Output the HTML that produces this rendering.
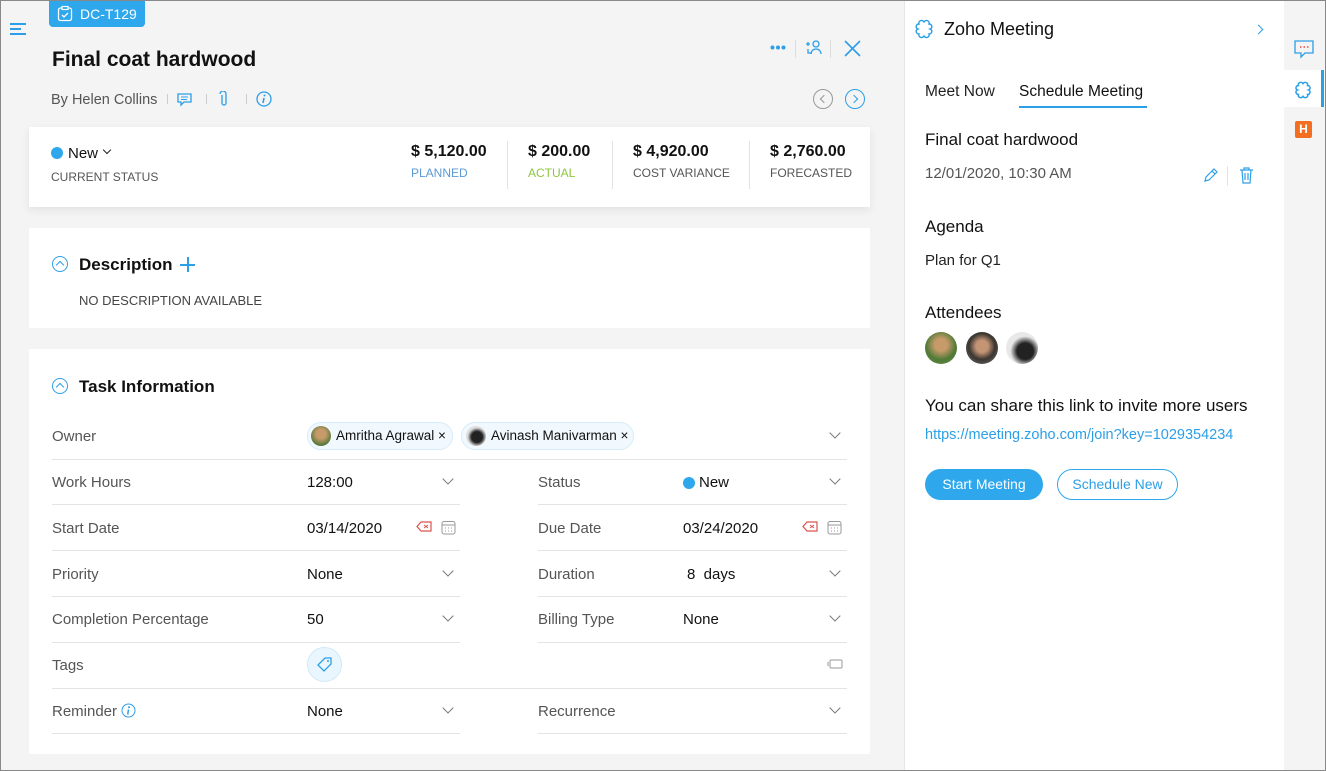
<!DOCTYPE html>
<html><head><meta charset="utf-8"><style>
*{box-sizing:border-box;margin:0;padding:0}
body{width:1326px;height:771px;overflow:hidden;font-family:"Liberation Sans",sans-serif;color:#111;background:#f4f4f4;position:relative}
.a{position:absolute;white-space:nowrap}
.card{position:absolute;left:29px;width:841px;background:#fff}
.lbl{color:#555;font-size:15px}
.val{color:#111;font-size:15px}
.sep{position:absolute;height:1px;background:#e4e4e4}
.chev{position:absolute;width:8px;height:8px;border-right:1.3px solid #777;border-bottom:1.3px solid #777;transform:rotate(45deg)}
.blue{color:#2d9fe6}
</style></head><body>
<!-- hamburger -->
<div class="a" style="left:10px;top:23px;width:16px;height:2px;background:#2d9fe6"></div>
<div class="a" style="left:10px;top:28px;width:11px;height:2px;background:#2d9fe6"></div>
<div class="a" style="left:10px;top:33px;width:16px;height:2px;background:#2d9fe6"></div>
<!-- tag -->
<div class="a" style="left:49px;top:0;width:96px;height:27px;background:#2ea7ec;border-radius:0 0 4px 4px;color:#fff;font-size:14px;padding:6px 0 0 31px">DC-T129</div>
<svg class="a" style="left:57px;top:5px" width="16" height="17" viewBox="0 0 16 17"><rect x="1.5" y="3" width="13" height="12.5" rx="2" fill="none" stroke="#fff" stroke-width="1.3"/><rect x="5" y="1.5" width="6" height="3" fill="#2ea7ec" stroke="#fff" stroke-width="1.2"/><path d="M5 10l2 2 4-4" fill="none" stroke="#fff" stroke-width="1.3"/></svg>
<div class="a" style="left:52px;top:48px;font-size:21px;font-weight:bold;color:#111">Final coat hardwood</div>
<div class="a" style="left:51px;top:92px;font-size:14.5px;color:#555">By Helen Collins</div>
<div class="a" style="left:167px;top:94px;width:1px;height:10px;background:#ccc"></div>
<div class="a" style="left:206px;top:94px;width:1px;height:10px;background:#ccc"></div>
<div class="a" style="left:246px;top:94px;width:1px;height:10px;background:#ccc"></div>
<svg class="a" style="left:176px;top:92px" width="17" height="15" viewBox="0 0 17 15"><path d="M2 2h13v8H8l-3 3v-3H2z" fill="none" stroke="#2d9fe6" stroke-width="1.3"/><path d="M5 5h7M5 7.5h6" stroke="#2d9fe6"/></svg>
<svg class="a" style="left:219px;top:91px" width="10" height="17" viewBox="0 0 10 17"><path d="M3 4v8a2 2 0 004 0V3a3 3 0 00-6 0" fill="none" stroke="#2d9fe6" stroke-width="1.3"/></svg>
<svg class="a" style="left:256px;top:91px" width="16" height="16" viewBox="0 0 16 16"><circle cx="8" cy="8" r="7" fill="none" stroke="#2d9fe6" stroke-width="1.3"/><circle cx="8.5" cy="4.5" r="1" fill="#2d9fe6"/><path d="M8 7l-1 5" stroke="#2d9fe6" stroke-width="1.6"/></svg>
<!-- top right icons -->
<svg class="a" style="left:770px;top:45px" width="16" height="5"><circle cx="2.5" cy="2.5" r="2" fill="#2d9fe6"/><circle cx="8" cy="2.5" r="2" fill="#2d9fe6"/><circle cx="13.5" cy="2.5" r="2" fill="#2d9fe6"/></svg>
<div class="a" style="left:795px;top:40px;width:1px;height:18px;background:#ddd"></div>
<div class="a" style="left:830px;top:40px;width:1px;height:18px;background:#ddd"></div>
<svg class="a" style="left:805px;top:39px" width="18" height="18" viewBox="0 0 18 18"><circle cx="11" cy="5" r="3" fill="none" stroke="#2d9fe6" stroke-width="1.3"/><path d="M6 15a5 5 0 0110 0M1 5h4M3 3v4M3 10v4h4" fill="none" stroke="#2d9fe6" stroke-width="1.3"/></svg>
<svg class="a" style="left:844px;top:40px" width="17" height="17"><path d="M1 1l15 15M16 1L1 16" stroke="#2d9fe6" stroke-width="1.6"/></svg>
<div class="a" style="left:813px;top:89px;width:20px;height:20px;border:1.3px solid #999;border-radius:50%"></div>
<div class="a" style="left:821px;top:96px;width:6px;height:6px;border-left:1.3px solid #999;border-bottom:1.3px solid #999;transform:rotate(45deg)"></div>
<div class="a" style="left:845px;top:89px;width:20px;height:20px;border:1.5px solid #2d9fe6;border-radius:50%"></div>
<div class="a" style="left:851px;top:96px;width:6px;height:6px;border-right:1.5px solid #2d9fe6;border-top:1.5px solid #2d9fe6;transform:rotate(45deg)"></div>

<!-- card1 -->
<div class="card" style="top:127px;height:80px;box-shadow:0 3px 8px rgba(0,0,0,.08)"></div>
<div class="a" style="left:51px;top:147px;width:12px;height:12px;border-radius:50%;background:#2ea7ec"></div>
<div class="a val" style="left:68px;top:145px">New</div>
<div class="a" style="left:104px;top:147px;width:6px;height:6px;border-right:1.3px solid #222;border-bottom:1.3px solid #222;transform:rotate(45deg)"></div>
<div class="a" style="left:51px;top:170px;font-size:12px;color:#555">CURRENT STATUS</div>
<div class="a" style="left:411px;top:143px;font-size:16px;font-weight:bold">$ 5,120.00</div>
<div class="a" style="left:411px;top:166px;font-size:12px;color:#5a9ad6">PLANNED</div>
<div class="a" style="left:507px;top:141px;width:1px;height:48px;background:#e2e2e2"></div>
<div class="a" style="left:528px;top:143px;font-size:16px;font-weight:bold">$ 200.00</div>
<div class="a" style="left:528px;top:166px;font-size:12px;color:#8cc63f">ACTUAL</div>
<div class="a" style="left:612px;top:141px;width:1px;height:48px;background:#e2e2e2"></div>
<div class="a" style="left:633px;top:143px;font-size:16px;font-weight:bold">$ 4,920.00</div>
<div class="a" style="left:633px;top:166px;font-size:12px;color:#555">COST VARIANCE</div>
<div class="a" style="left:749px;top:141px;width:1px;height:48px;background:#e2e2e2"></div>
<div class="a" style="left:770px;top:143px;font-size:16px;font-weight:bold">$ 2,760.00</div>
<div class="a" style="left:770px;top:166px;font-size:12px;color:#555">FORECASTED</div>

<!-- card2 -->
<div class="card" style="top:228px;height:100px"></div>
<div class="a" style="left:52px;top:256px;width:16px;height:16px;border:1.3px solid #2d9fe6;border-radius:50%"></div>
<div class="a" style="left:57px;top:262px;width:6px;height:6px;border-left:1.3px solid #2d9fe6;border-top:1.3px solid #2d9fe6;transform:rotate(45deg)"></div>
<div class="a" style="left:79px;top:255px;font-size:17px;font-weight:bold">Description</div>
<div class="a" style="left:180px;top:264px;width:15px;height:1.5px;background:#2d9fe6"></div>
<div class="a" style="left:187px;top:257px;width:1.5px;height:15px;background:#2d9fe6"></div>
<div class="a" style="left:79px;top:293px;font-size:13px;color:#444">NO DESCRIPTION AVAILABLE</div>

<!-- card3 -->
<div class="card" style="top:349px;height:405px"></div>
<div class="a" style="left:52px;top:378px;width:16px;height:16px;border:1.3px solid #2d9fe6;border-radius:50%"></div>
<div class="a" style="left:57px;top:384px;width:6px;height:6px;border-left:1.3px solid #2d9fe6;border-top:1.3px solid #2d9fe6;transform:rotate(45deg)"></div>
<div class="a" style="left:79px;top:377px;font-size:17px;font-weight:bold">Task Information</div>

<div class="a lbl" style="left:52px;top:428px">Owner</div>
<div class="a" style="left:307px;top:422px;width:146px;height:28px;border:1px solid #d5ecfa;background:#f1f9fe;border-radius:14px"></div>
<div class="a" style="left:311px;top:426px;width:20px;height:20px;border-radius:50%;background:radial-gradient(circle at 50% 40%,#c79a6a 30%,#5a7a3c 70%)"></div>
<div class="a" style="left:336px;top:428px;font-size:13.5px">Amritha Agrawal ×</div>
<div class="a" style="left:461px;top:422px;width:173px;height:28px;border:1px solid #d5ecfa;background:#f1f9fe;border-radius:14px"></div>
<div class="a" style="left:466px;top:426px;width:20px;height:20px;border-radius:50%;background:radial-gradient(circle at 55% 55%,#222 35%,#ddd 60%)"></div>
<div class="a" style="left:491px;top:428px;font-size:13.5px">Avinash Manivarman ×</div>
<div class="chev" style="left:831px;top:429px"></div>
<div class="sep" style="left:52px;top:459px;width:795px"></div>

<div class="a lbl" style="left:52px;top:474px">Work Hours</div><div class="a val" style="left:307px;top:474px">128:00</div><div class="chev" style="left:444px;top:475px"></div>
<div class="a lbl" style="left:538px;top:474px">Status</div>
<div class="a" style="left:683px;top:477px;width:12px;height:12px;border-radius:50%;background:#2ea7ec"></div>
<div class="a val" style="left:699px;top:474px">New</div><div class="chev" style="left:831px;top:475px"></div>
<div class="sep" style="left:52px;top:504px;width:408px"></div><div class="sep" style="left:538px;top:504px;width:309px"></div>

<div class="a lbl" style="left:52px;top:520px">Start Date</div><div class="a val" style="left:307px;top:520px;width:79px;overflow:hidden">03/14/2020</div>
<div class="a lbl" style="left:538px;top:520px">Due Date</div><div class="a val" style="left:683px;top:520px">03/24/2020</div>
<svg class="a" style="left:416px;top:521px" width="16" height="12"><path d="M5 1h10v9H5L1 5.5z" fill="none" stroke="#d9534f" stroke-width="1.2"/><path d="M8 4l4 3M12 4l-4 3" stroke="#d9534f"/></svg>
<svg class="a" style="left:802px;top:521px" width="16" height="12"><path d="M5 1h10v9H5L1 5.5z" fill="none" stroke="#d9534f" stroke-width="1.2"/><path d="M8 4l4 3M12 4l-4 3" stroke="#d9534f"/></svg>
<svg class="a" style="left:441px;top:520px" width="15" height="15"><rect x="1" y="1.5" width="13" height="12.5" rx="2" fill="none" stroke="#999"/><path d="M1 5h13" stroke="#999"/><path d="M4 8h1M7 8h1M10 8h1M4 11h1M7 11h1M10 11h1" stroke="#999"/></svg>
<svg class="a" style="left:827px;top:520px" width="15" height="15"><rect x="1" y="1.5" width="13" height="12.5" rx="2" fill="none" stroke="#999"/><path d="M1 5h13" stroke="#999"/><path d="M4 8h1M7 8h1M10 8h1M4 11h1M7 11h1M10 11h1" stroke="#999"/></svg>
<div class="sep" style="left:52px;top:550px;width:408px"></div><div class="sep" style="left:538px;top:550px;width:309px"></div>

<div class="a lbl" style="left:52px;top:566px">Priority</div><div class="a val" style="left:307px;top:566px">None</div><div class="chev" style="left:444px;top:567px"></div>
<div class="a lbl" style="left:538px;top:566px">Duration</div><div class="a val" style="left:687px;top:566px">8&nbsp; days</div><div class="chev" style="left:831px;top:567px"></div>
<div class="sep" style="left:52px;top:596px;width:408px"></div><div class="sep" style="left:538px;top:596px;width:309px"></div>

<div class="a lbl" style="left:52px;top:611px">Completion Percentage</div><div class="a val" style="left:307px;top:611px">50</div><div class="chev" style="left:444px;top:612px"></div>
<div class="a lbl" style="left:538px;top:611px">Billing Type</div><div class="a val" style="left:683px;top:611px">None</div><div class="chev" style="left:831px;top:612px"></div>
<div class="sep" style="left:52px;top:642px;width:408px"></div><div class="sep" style="left:538px;top:642px;width:309px"></div>

<div class="a lbl" style="left:52px;top:657px">Tags</div>
<div class="a" style="left:307px;top:647px;width:35px;height:35px;border-radius:50%;background:#eaf6fd;border:1px solid #cfe9f9"></div>
<svg class="a" style="left:316px;top:656px" width="17" height="17"><path d="M9 2h6v6l-7 7-6-6z" fill="none" stroke="#2d9fe6" stroke-width="1.3"/><circle cx="12" cy="5" r="1" fill="#2d9fe6"/></svg>
<svg class="a" style="left:827px;top:658px" width="16" height="12"><rect x="3" y="2" width="12" height="8" rx="1" fill="none" stroke="#999"/><path d="M1 4v4" stroke="#999"/></svg>
<div class="sep" style="left:52px;top:688px;width:795px"></div>

<div class="a lbl" style="left:52px;top:703px">Reminder</div>
<svg class="a" style="left:121px;top:703px" width="15" height="15"><circle cx="7.5" cy="7.5" r="6.5" fill="none" stroke="#2d9fe6"/><circle cx="8" cy="4.3" r="1" fill="#2d9fe6"/><path d="M7.5 6.5l-.8 5" stroke="#2d9fe6" stroke-width="1.5"/></svg>
<div class="a val" style="left:307px;top:703px">None</div><div class="chev" style="left:444px;top:704px"></div>
<div class="a lbl" style="left:538px;top:703px">Recurrence</div><div class="chev" style="left:831px;top:704px"></div>
<div class="sep" style="left:52px;top:733px;width:408px"></div><div class="sep" style="left:538px;top:733px;width:309px"></div>

<!-- right panel -->
<div class="a" style="left:904px;top:0;width:380px;height:771px;background:#fff;border-left:1px solid #e6e6e6"></div>
<svg class="a" style="left:914px;top:19px" width="20" height="20" viewBox="0 0 20 20"><path d="M10 3c2-3 6-1 5 2 3 0 4 4 1 5 3 1 2 5-1 5 1 3-3 5-5 2-2 3-6 1-5-2-3 0-4-4-1-5-3-1-2-5 1-5-1-3 3-5 5-2z" fill="none" stroke="#2d9fe6" stroke-width="1.4"/></svg>
<div class="a" style="left:944px;top:19px;font-size:18px">Zoho Meeting</div>
<div class="a" style="left:1255px;top:26px;width:7px;height:7px;border-right:1.5px solid #2d9fe6;border-top:1.5px solid #2d9fe6;transform:rotate(45deg)"></div>
<div class="a" style="left:925px;top:83px;font-size:15.5px;color:#222">Meet Now</div>
<div class="a" style="left:1019px;top:83px;font-size:15.5px;color:#111">Schedule Meeting</div>
<div class="a" style="left:1019px;top:106px;width:128px;height:2px;background:#2d9fe6"></div>
<div class="a" style="left:925px;top:130px;font-size:17px">Final coat hardwood</div>
<div class="a" style="left:925px;top:165px;font-size:15px;color:#555">12/01/2020, 10:30 AM</div>
<svg class="a" style="left:1202px;top:167px" width="16" height="17"><path d="M3 14l1-4 8-8 3 3-8 8z M10 4l3 3" fill="none" stroke="#2d9fe6" stroke-width="1.2"/></svg>
<div class="a" style="left:1227px;top:166px;width:1px;height:20px;background:#e4e4e4"></div>
<svg class="a" style="left:1239px;top:167px" width="15" height="17"><path d="M1 3h13M5 3V1h5v2M3 3l1 13h7l1-13M6 6v7M9 6v7" fill="none" stroke="#2d9fe6" stroke-width="1.2"/></svg>
<div class="a" style="left:925px;top:217px;font-size:17px">Agenda</div>
<div class="a" style="left:925px;top:252px;font-size:15px;color:#222">Plan for Q1</div>
<div class="a" style="left:925px;top:303px;font-size:17px">Attendees</div>
<div class="a" style="left:925px;top:332px;width:32px;height:32px;border-radius:50%;background:radial-gradient(circle at 50% 40%,#c79a6a 25%,#4f7a36 60%,#6b8d4a)"></div>
<div class="a" style="left:966px;top:332px;width:32px;height:32px;border-radius:50%;background:radial-gradient(circle at 50% 45%,#c49575 25%,#3a3530 55%,#777)"></div>
<div class="a" style="left:1006px;top:332px;width:32px;height:32px;border-radius:50%;background:radial-gradient(circle at 60% 60%,#222 30%,#e8e8e8 55%)"></div>
<div class="a" style="left:925px;top:396px;font-size:17px">You can share this link to invite more users</div>
<div class="a blue" style="left:925px;top:427px;font-size:14.5px">https://meeting.zoho.com/join?key=1029354234</div>
<div class="a" style="left:925px;top:469px;width:118px;height:31px;border-radius:16px;background:#2ea7ec;color:#fff;font-size:14px;text-align:center;line-height:31px">Start Meeting</div>
<div class="a" style="left:1057px;top:469px;width:121px;height:31px;border-radius:16px;border:1.3px solid #2ea7ec;color:#2d9fe6;font-size:14px;text-align:center;line-height:29px">Schedule New</div>

<!-- sidebar -->
<div class="a" style="left:1284px;top:70px;width:41px;height:37px;background:#fff"></div>
<div class="a" style="left:1321px;top:70px;width:3px;height:37px;background:#2d9fe6"></div>
<svg class="a" style="left:1294px;top:40px" width="20" height="19"><path d="M1 1h18v12H11l-4 4v-4H1z" fill="none" stroke="#2d9fe6" stroke-width="1.3"/><path d="M6 7h1.5M9.5 7h1.5M13 7h1.5" stroke="#e74c3c" stroke-width="1.5"/></svg>
<svg class="a" style="left:1294px;top:81px" width="18" height="18" viewBox="0 0 20 20"><path d="M10 3c2-3 6-1 5 2 3 0 4 4 1 5 3 1 2 5-1 5 1 3-3 5-5 2-2 3-6 1-5-2-3 0-4-4-1-5-3-1-2-5 1-5-1-3 3-5 5-2z" fill="none" stroke="#2d9fe6" stroke-width="1.6"/></svg>
<div class="a" style="left:1295px;top:121px;width:17px;height:17px;background:#f26f21;border-radius:2px;color:#fff;font-size:12px;font-weight:bold;text-align:center;line-height:17px">H</div>
<div class="a" style="left:0;top:0;width:1326px;height:771px;border:1px solid #888;pointer-events:none"></div>
</body></html>
